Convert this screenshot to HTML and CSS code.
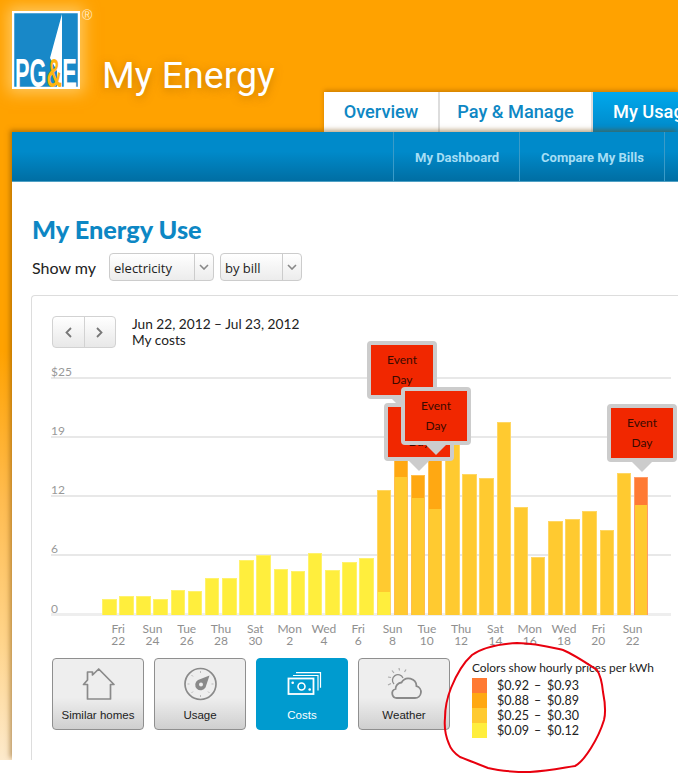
FILE: index.html

```html
<!DOCTYPE html>
<html lang="en">
<head>
  <meta charset="UTF-8">
  <title>My Energy | PG&amp;E</title>
  <link rel="stylesheet" href="styles.css">
</head>
<body>
  <header class="top">
    <div class="logo">
      <svg width="68" height="78" viewBox="0 0 68 78">
        <rect x="1" y="1" width="66" height="76" fill="#1888c8" stroke="#fff" stroke-width="2.5"/>
        <polygon points="50,3 50,76 45,76 45,60 38,47" fill="#fff"/>
        <text class="logo-text" transform="translate(3 76) scale(.545 1)">PG<tspan class="logo-amp">&amp;</tspan>E</text>
      </svg>
      <span class="logo-reg">®</span>
    </div>
    <div class="brand">My Energy</div>
    <nav class="tabs">
      <a class="tab tab-first">Overview</a>
      <a class="tab tab-second">Pay &amp; Manage</a>
      <a class="tab tab-on">My Usage</a>
    </nav>
  </header>

  <div class="sheet">
    <nav class="subnav">
      <a class="subnav-item">My Dashboard</a>
      <a class="subnav-item">Compare My Bills</a>
    </nav>

    <main class="content">
      <h1>My Energy Use</h1>
      <div class="show-row">
        <span class="show-label">Show my</span>
        <div class="select select-wide"><span class="select-val">electricity</span><span class="select-arrow"><svg width="10" height="6" viewBox="0 0 10 6"><path d="M1 1l4 4 4-4" fill="none" stroke="#888" stroke-width="1.6"/></svg></span></div>
        <div class="select select-narrow"><span class="select-val">by bill</span><span class="select-arrow"><svg width="10" height="6" viewBox="0 0 10 6"><path d="M1 1l4 4 4-4" fill="none" stroke="#888" stroke-width="1.6"/></svg></span></div>
      </div>

      <section class="panel">
        <div class="panel-head">
          <div class="pager">
            <span class="pager-btn"><svg width="7" height="11" viewBox="0 0 7 11"><path d="M6 1L1.5 5.5 6 10" fill="none" stroke="#777" stroke-width="1.8"/></svg></span>
            <span class="pager-btn"><svg width="7" height="11" viewBox="0 0 7 11"><path d="M1 1l4.5 4.5L1 10" fill="none" stroke="#777" stroke-width="1.8"/></svg></span>
          </div>
          <div class="range">
            <div>Jun 22, 2012 – Jul 23, 2012</div>
            <div>My costs</div>
          </div>
        </div>

        <div class="chart">
          <div class="grid">
            <div class="grid-row"><span>$25</span></div>
            <div class="grid-row"><span>19</span></div>
            <div class="grid-row"><span>12</span></div>
            <div class="grid-row"><span>6</span></div>
            <div class="grid-row grid-base"><span>0</span></div>
          </div>
          <div class="bars" id="bars"></div>

          <div class="pop pop-a">Event<br>Day</div>
          <div class="pop pop-b">Event<br>Day</div>
          <div class="pop pop-c">Event<br>Day</div>
          <div class="pop pop-d">Event<br>Day</div>
        </div>

        <div class="days" id="days"></div>

        <div class="lower">
          <a class="mode">
            <svg width="34" height="34" viewBox="0 0 34 34"><path d="M17.7 1L33 16.5h-3.500V31h-23V16.500h-4L6.500 12V4h5v3z" fill="none" stroke="#8a8a8a" stroke-width="1.7" stroke-linejoin="round"/></svg>
            <span>Similar homes</span>
          </a>
          <a class="mode">
            <svg width="34" height="34" viewBox="0 0 34 34"><circle cx="17.500" cy="16" r="15.500" fill="none" stroke="#8a8a8a" stroke-width="1.7"/><path d="M26.500 7.500l-4 12a5.500 5.500 0 1 1-7.500-7.500z" fill="#8a8a8a"/><circle cx="18" cy="16.500" r="2" fill="#eee"/><path d="M17.500 3v2M4.500 16h2M28.500 16h2M17.500 27v2M8.500 7l1.500 1.500M8.500 25l1.500-1.500M26.500 25L25 23.500" stroke="#bbb" stroke-width="1"/></svg>
            <span>Usage</span>
          </a>
          <a class="mode mode-on">
            <svg width="34" height="34" viewBox="0 0 34 34"><rect x="3.500" y="10.500" width="25" height="15.500" fill="none" stroke="#fff" stroke-width="1.8"/><circle cx="16.500" cy="18.500" r="3.500" fill="none" stroke="#fff" stroke-width="1.6"/><circle cx="7.700" cy="14.700" r="1.300" fill="#fff"/><circle cx="24.700" cy="21.500" r="1.300" fill="#fff"/><path d="M8 7.500h25v15M11 4.700h24.500v15" fill="none" stroke="#fff" stroke-width="1.2"/></svg>
            <span>Costs</span>
          </a>
          <a class="mode">
            <svg width="34" height="34" viewBox="0 0 34 34"><path d="M10 30h18a6 6 0 0 0 1.500-11.800 8 8 0 0 0-15-3.700A6.500 6.500 0 0 0 8.500 21 4.600 4.600 0 0 0 10 30z" fill="none" stroke="#8a8a8a" stroke-width="1.8"/><path d="M7 16a5.500 5.500 0 1 1 9-6" fill="none" stroke="#8a8a8a" stroke-width="1.3"/><path d="M12 0l.5 2.500M5 2.500l2 2.500M1 9l3 .5M1 17l3-1.500M19 1.500l-1.500 2.500" stroke="#aaa" stroke-width="1.2"/></svg>
            <span>Weather</span>
          </a>
          <div class="legend">
            <div class="legend-title">Colors show hourly prices per kWh</div>
            <div class="legend-row"><i class="swatch c-red"></i><span class="from">$0.92</span><span class="dash">–</span><span>$0.93</span></div>
            <div class="legend-row"><i class="swatch c-org"></i><span class="from">$0.88</span><span class="dash">–</span><span>$0.89</span></div>
            <div class="legend-row"><i class="swatch c-gold"></i><span class="from">$0.25</span><span class="dash">–</span><span>$0.30</span></div>
            <div class="legend-row"><i class="swatch c-yel"></i><span class="from">$0.09</span><span class="dash">–</span><span>$0.12</span></div>
          </div>
        </div>
      </section>
    </main>
  </div>

  <svg class="scribble" width="678" height="773" viewBox="0 0 678 773">
    <path d="M472 655C482 648 500 644 517 643C535 643 550 647 563 650C573 654 585 662 597 670C601 676 602 682 603 692C605 702 606 712 604 720C601 730 596 740 591 748C586 756 581 763 575 766C562 768 548 771 530 772C515 772 500 771 488 768C478 764 468 760 460 757C454 753 451 750 449 744C446 737 444 728 445 718C445 708 447 698 451 688C455 678 462 664 472 655Z" fill="none" stroke="#e8000e" stroke-width="2"/>
  </svg>

  <script>
    // [total height, lower segment height, upper colour, lower colour]
    var data = [
      [16],[19],[18.7],[16],[25],[24],[37],[37],[55],[60],[45.7],[43.7],[62],[45.3],[52.7],[57.3],
      [125,23,'c-gold','c-yel'],[175,138,'c-org','c-gold'],[140,116.7,'c-org','c-gold'],[182,105.7,'c-org','c-gold'],
      [190],[140.7],[137.3],[193.3],[107.7],[58.3],[94],[96],[104],[85],[141.7],[138.3,110.3,'c-red','c-gold']
    ];
    var bars = document.getElementById('bars');
    data.forEach(function (d, i) {
      var bar = document.createElement('div');
      bar.className = 'bar ' + (i < 16 ? 'c-yel' : 'c-gold');
      bar.style.height = d[0] + 'px';
      if (d.length > 1) {
        bar.className = 'bar ' + d[2];
        var low = document.createElement('div');
        low.className = 'bar-low ' + d[3];
        low.style.height = d[1] + 'px';
        bar.appendChild(low);
      }
      bars.appendChild(bar);
    });

    var days = [['Fri',22],['Sun',24],['Tue',26],['Thu',28],['Sat',30],['Mon',2],['Wed',4],['Fri',6],
                ['Sun',8],['Tue',10],['Thu',12],['Sat',14],['Mon',16],['Wed',18],['Fri',20],['Sun',22]];
    document.getElementById('days').innerHTML = days.map(function (d) {
      return '<div class="day">' + d[0] + '<br>' + d[1] + '</div>';
    }).join('');
  </script>
</body>
</html>
```

FILE: styles.css

```css
* {
  box-sizing: border-box;
}
html, body {
  margin: 0;
  height: 773px;
  overflow: hidden;
}
body {
  width: 678px;
  position: relative;
  font-family: Lato, "Open Sans", sans-serif;
  color: #222;
  background: linear-gradient(to bottom, #ffa200 0, #ffa200 350px, #ffbc50 500px, #ffd48a 640px, #fdeacc 760px, #fff 760px);
}
a {
  display: block;
}

/* header */
.top {
  height: 132px;
  display: flex;
  padding-left: 12px;
  align-items: flex-start;
}
.logo {
  margin-top: 11px;
  width: 68px;
  height: 78px;
  flex: none;
  position: relative;
  box-shadow: 0 0 14px 4px rgba(255, 240, 190, .5);
}
.logo svg {
  display: block;
}
.logo-text {
  font: bold 40px "Liberation Sans", sans-serif;
  fill: #fff;
}
.logo-amp {
  fill: #ffb511;
}
.logo-reg {
  position: absolute;
  left: 70px;
  top: -4px;
  font: 14px/16px "Liberation Sans", sans-serif;
  color: #ffe9c0;
}
.brand {
  margin: 53px 0 0 22px;
  font: 400 37.5px Roboto, sans-serif;
  color: #fff;
  white-space: nowrap;
  text-shadow: 0 2px 8px rgba(150, 90, 0, .5);
}
.tabs {
  position: absolute;
  left: 324px;
  top: 92px;
  width: 354px;
  overflow: hidden;
  display: flex;
  white-space: nowrap;
  box-shadow: 0 -2px 4px rgba(120, 70, 0, .35);
}
.tab {
  flex: none;
  height: 40px;
  text-align: center;
  background: #fff;
  border-right: 2px solid #ddd;
  color: #0d87c4;
  font: 500 18.2px/40px Roboto, sans-serif;
}
.tab-first {
  width: 116px;
}
.tab-second {
  width: 153px;
}
.tab-on {
  padding-left: 20px;
  background: linear-gradient(to bottom, #00a8ec, #0088c8);
  color: #fff;
  border-right: 0;
}

/* blue bar and white sheet */
.sheet {
  margin-left: 12px;
  height: 628px;
  background: #fff;
  overflow: hidden;
  box-shadow: -2px -2px 5px rgba(120, 70, 0, .5);
  clip-path: inset(-10px 0 0 -10px);
}
.subnav {
  height: 50px;
  padding-left: 381px;
  display: flex;
  background: linear-gradient(to bottom, #008aca 0, #008aca 40%, #006ea3 100%);
  border-bottom: 1px solid #4fa0c4;
}
.subnav-item {
  padding: 0 20px 0 21px;
  border-left: 1px solid #3a9bc8;
  color: #a5def5;
  font: bold 13px/51px Roboto, sans-serif;
  white-space: nowrap;
}
.subnav-item:last-child {
  border-right: 1px solid #3a9bc8;
}
.content {
  padding: 33px 0 0 19px;
}
h1 {
  margin: 0 0 0 1px;
  font: 900 25.3px/28px Lato, sans-serif;
  color: #0d87c4;
}
.show-row {
  display: flex;
  align-items: center;
  margin: 10px 0 0 1px;
}
.show-label {
  width: 77px;
  font-size: 16px;
}
.select {
  height: 28px;
  margin-right: 6px;
  display: flex;
  border: 1px solid #ccc;
  border-radius: 4px;
  background: linear-gradient(to bottom, #fff, #ececec);
  font: 13px "Open Sans", sans-serif;
}
.select-wide {
  width: 105px;
}
.select-narrow {
  width: 82px;
}
.select-val {
  flex: 1;
  padding-left: 4px;
  line-height: 28px;
}
.select-arrow {
  width: 19px;
  border-left: 1px solid #ccc;
  display: flex;
  align-items: center;
  justify-content: center;
}

/* chart panel */
.panel {
  margin-top: 14px;
  height: 500px;
  padding: 20px 0 0 20px;
  border: 1px solid #ddd;
  border-right: 0;
  border-radius: 4px 0 0 0;
}
.panel-head {
  display: flex;
}
.pager {
  display: flex;
  width: 64px;
  height: 32px;
  border: 1px solid #d2d2d2;
  border-radius: 4px;
  background: linear-gradient(to bottom, #fff, #e8e8e8);
}
.pager-btn {
  flex: 1;
  display: flex;
  align-items: center;
  justify-content: center;
}
.pager-btn + .pager-btn {
  border-left: 1px solid #d2d2d2;
}
.range {
  margin-left: 16px;
  font-size: 13.7px;
  line-height: 16px;
}
.chart {
  position: relative;
  margin: 29px 0 0 -1px;
  width: 620px;
  height: 239px;
}
.grid {
  height: 100%;
  display: flex;
  flex-direction: column;
  justify-content: space-between;
}
.grid-row {
  height: 2px;
  background: #e8e8e8;
  position: relative;
}
.grid-row span {
  position: absolute;
  left: 0;
  bottom: 0;
  font-size: 12px;
  line-height: 14px;
  color: #999;
}
.grid-base {
  height: 3px;
  background: #eee;
}
.bars {
  position: absolute;
  left: 51px;
  bottom: 1px;
  display: flex;
  gap: 2.67px;
  align-items: flex-end;
}
.bar {
  width: 14.5px;
  border: 1px solid rgba(255, 255, 255, .25);
  border-bottom: 0;
  display: flex;
  align-items: flex-end;
}
.bar-low {
  width: 100%;
}
.c-yel {
  background: #ffee3d;
}
.c-gold {
  background: #ffca30;
}
.c-org {
  background: #ffa812;
}
.c-red {
  background: #ff7a33;
}
.pop {
  position: absolute;
  width: 70px;
  height: 58px;
  background: #f12700;
  border: 4px solid #ccc;
  border-radius: 4px;
  color: #3a0a00;
  font-size: 12px;
  line-height: 20px;
  text-align: center;
  padding-top: 5px;
}
.pop::after {
  content: "";
  position: absolute;
  left: 50%;
  margin-left: -10.5px;
  top: 54px;
  border: 10.5px solid transparent;
  border-top-color: #ccc;
  border-bottom: 0;
}
.pop-a {
  left: 316px;
  top: -36px;
}
.pop-b {
  left: 333px;
  top: 26px;
}
.pop-d {
  left: 350px;
  top: 10px;
}
.pop-c {
  left: 556px;
  top: 27px;
}
.days {
  margin: 7px 0 0 49px;
  display: flex;
  width: 549px;
}
.day {
  width: 34.3px;
  text-align: center;
  font-size: 12px;
  line-height: 12px;
  color: #8f8f8f;
}

/* buttons and legend */
.lower {
  display: flex;
  margin-top: 11px;
}
.mode {
  width: 92px;
  height: 72px;
  margin-right: 10px;
  padding-top: 9px;
  border: 1px solid #8f8f8f;
  border-radius: 4px;
  background: linear-gradient(to bottom, #eee 0, #eee 55%, #cfcfcf 100%);
  text-align: center;
  font: 11.5px "Liberation Sans", sans-serif;
}
.mode svg {
  display: block;
  margin: 0 auto 7px;
  overflow: visible;
}
.mode-on {
  background: #009bcf;
  border-color: #009bcf;
  color: #fff;
}
.legend {
  margin: 3px 0 0 12px;
  font-size: 11.9px;
}
.legend-title {
  line-height: 14px;
  margin-bottom: 3px;
}
.legend-row {
  display: flex;
  height: 15px;
  line-height: 15px;
  font-size: 12.5px;
}
.swatch {
  width: 15px;
  margin-right: 10px;
}
.from {
  width: 31px;
}
.dash {
  width: 19px;
  text-align: center;
}

/* hand-drawn mark over the screenshot */
.scribble {
  position: absolute;
  left: 0;
  top: 0;
  pointer-events: none;
}
```
